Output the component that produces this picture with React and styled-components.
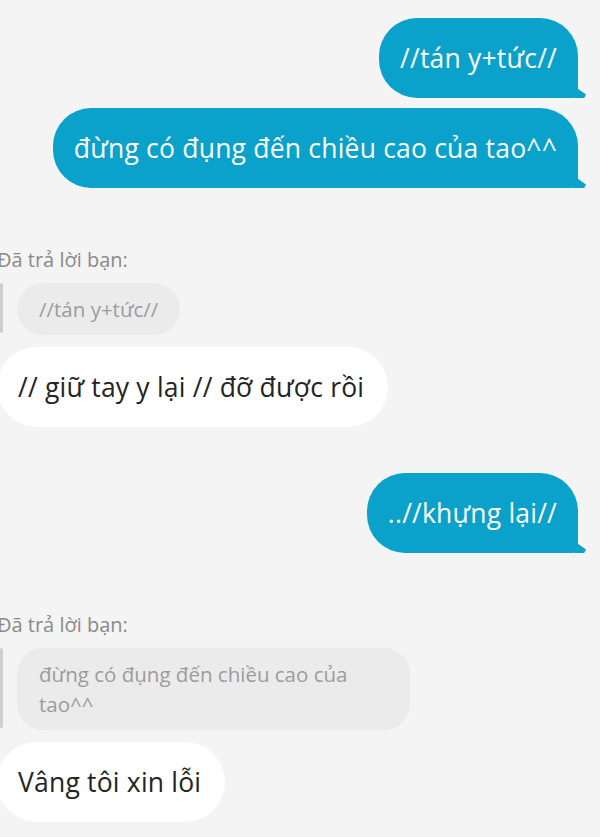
import styled, { createGlobalStyle } from "styled-components";

const GlobalStyle = createGlobalStyle`
    html, body {
        margin: 0;
        padding: 0;
        background: #f4f4f4;
    }
    body {
        font-family: "Open Sans", "Lato", sans-serif;
        overflow: hidden;
    }
`

const messages = [
    { id: 1, mine: true, text: "//tán y+tức//" },
    { id: 2, mine: true, text: "đừng có đụng đến chiều cao của tao^^" },
    { id: 3, mine: false, reply: "//tán y+tức//", text: "// giữ tay y lại // đỡ được rồi" },
    { id: 4, mine: true, text: "..//khựng lại//" },
    { id: 5, mine: false, reply: "đừng có đụng đến chiều cao của tao^^", text: "Vâng tôi xin lỗi" },
]

const App = () => {
    return (
        <Thread>
            <GlobalStyle />
            {messages.map((m, i) => {
                const prev = messages[i - 1]
                const spaced = prev && prev.mine !== m.mine
                if (m.mine) {
                    return (
                        <Outgoing key={m.id} $spaced={spaced}>
                            <BlueBubble>{m.text}</BlueBubble>
                        </Outgoing>
                    )
                }
                return (
                    <Incoming key={m.id} $spaced={spaced}>
                        <ReplyLabel>Đã trả lời bạn:</ReplyLabel>
                        <Quote>
                            <QuoteBar />
                            <QuoteBubble>{m.reply}</QuoteBubble>
                        </Quote>
                        <WhiteBubble>{m.text}</WhiteBubble>
                    </Incoming>
                )
            })}
        </Thread>
    );
}

const Thread = styled.div`
    display: flex;
    flex-direction: column;
    padding: 18px 0 0 0;
    height: 837px;
    box-sizing: border-box;
`

const Outgoing = styled.div`
    display: flex;
    justify-content: flex-end;
    padding-right: 22px;
    margin-top: ${p => (p.$spaced ? "46px" : "10px")};
    &:first-child { margin-top: 0; }
`

const Incoming = styled.div`
    display: flex;
    flex-direction: column;
    align-items: flex-start;
    margin-left: -3px;
    margin-top: ${p => (p.$spaced ? "58px" : "10px")};
`

const BlueBubble = styled.div`
    position: relative;
    background: #0aa1ca;
    color: #fff;
    font-size: 26.5px;
    line-height: 32px;
    letter-spacing: 0.2px;
    padding: 24px 21px 24px 21px;
    border-radius: 38px 38px 6px 38px;

    &::after {
        content: "";
        position: absolute;
        right: -8px;
        bottom: 0;
        width: 12px;
        height: 12px;
        background: #0aa1ca;
        clip-path: polygon(0 0, 100% 70%, 85% 100%, 0 100%);
    }
`

const ReplyLabel = styled.div`
    font-size: 20px;
    line-height: 28px;
    color: #8a8a8a;
`

const Quote = styled.div`
    display: flex;
    gap: 14px;
    margin: 9px 0 12px 3px;
`

const QuoteBar = styled.div`
    width: 3px;
    flex-shrink: 0;
    margin-bottom: 2px;
    background: #cfcfcf;
    border-radius: 2px;
`

const QuoteBubble = styled.div`
    box-sizing: border-box;
    max-width: 393px;
    background: #ebebeb;
    color: #9c9c9c;
    font-size: 20.5px;
    line-height: 30px;
    padding: 11px 22px;
    border-radius: 26px;
`

const WhiteBubble = styled.div`
    background: #fff;
    color: #242424;
    font-size: 26.5px;
    line-height: 32px;
    letter-spacing: 0.2px;
    padding: 24px 24px 24px 21px;
    border-radius: 40px;
`

export default App;
